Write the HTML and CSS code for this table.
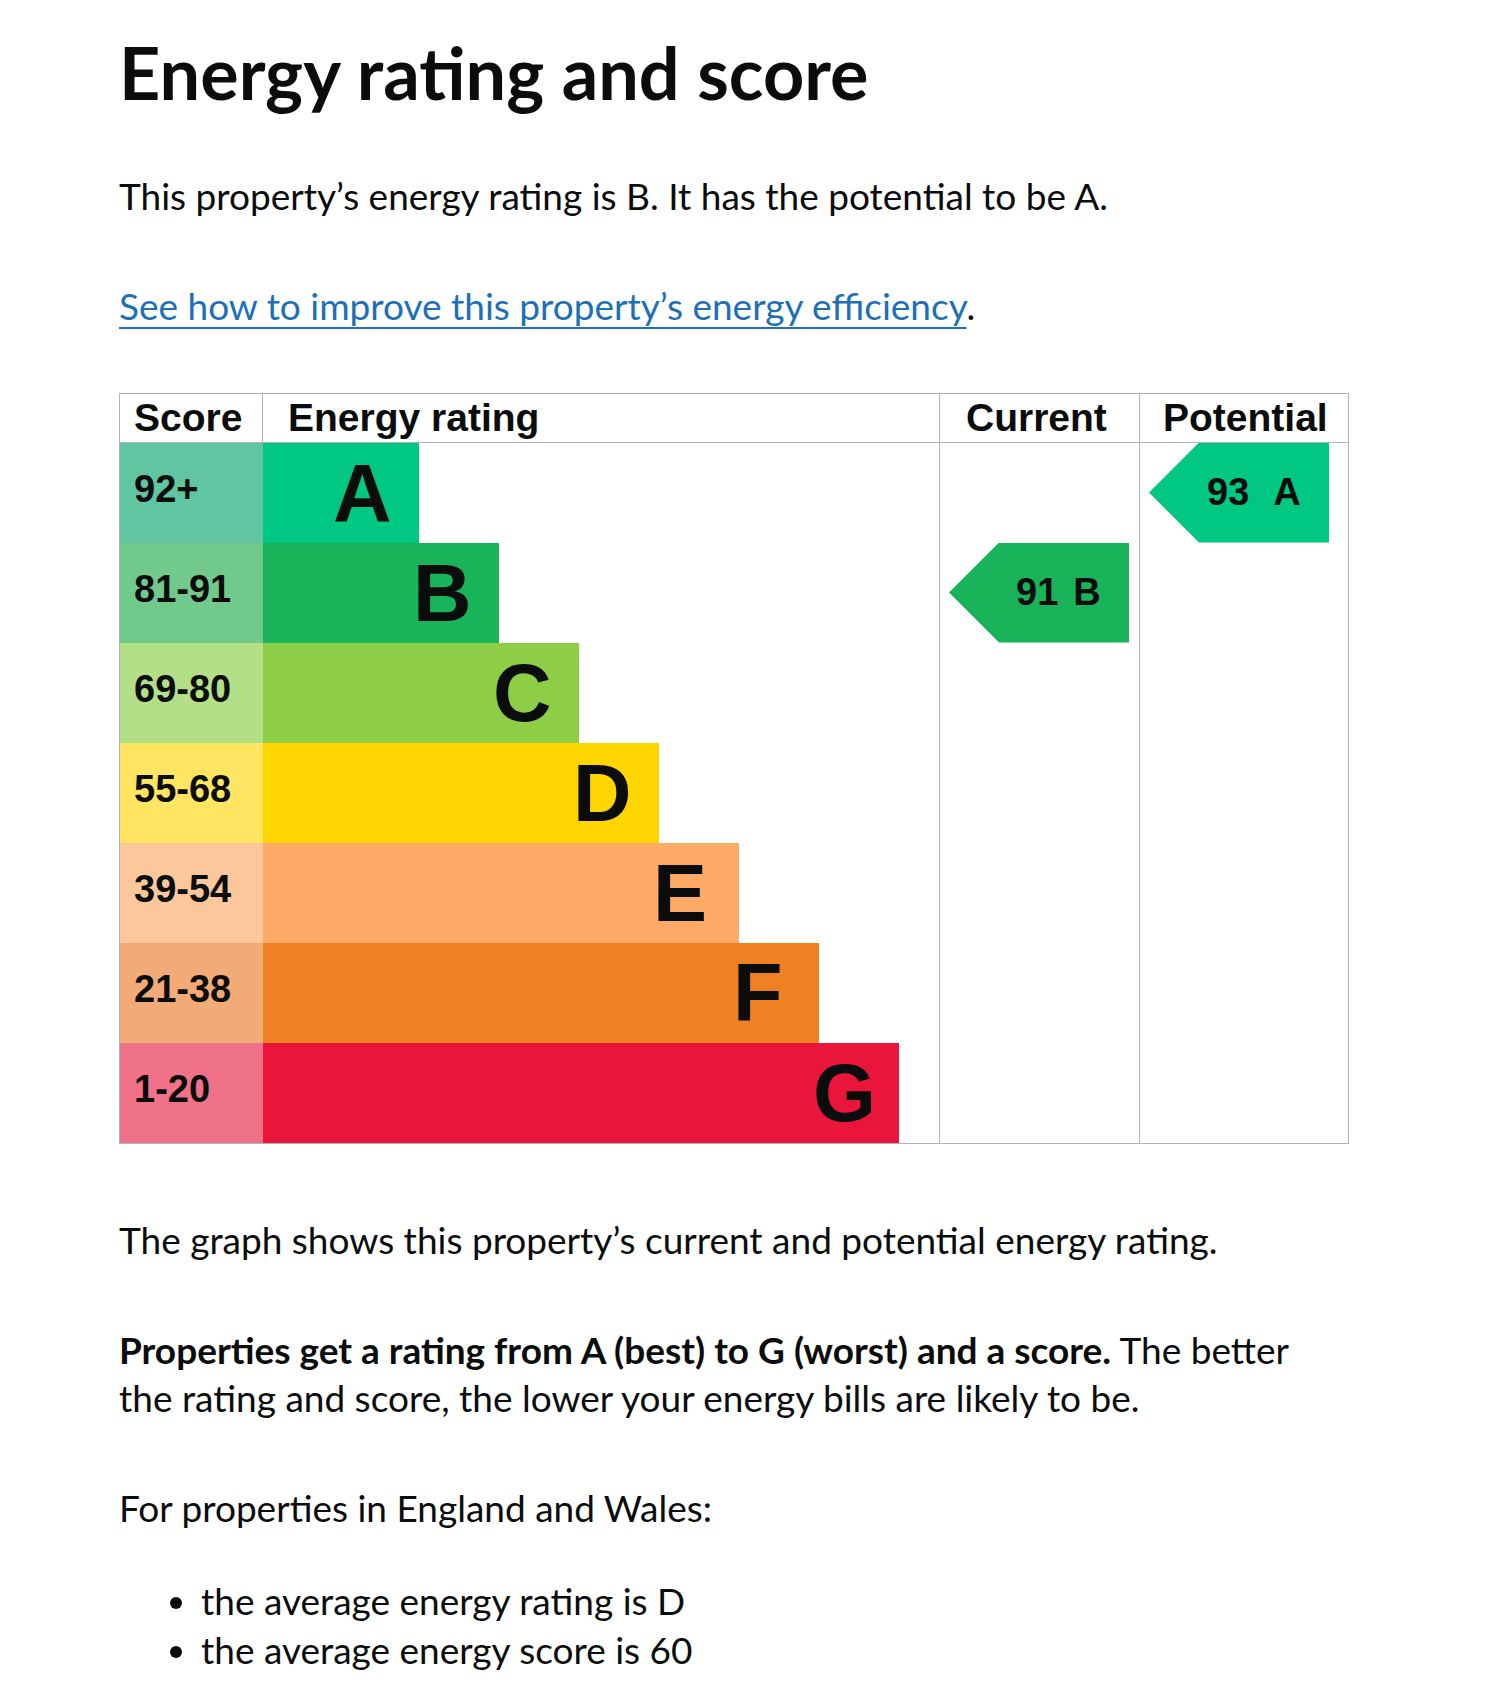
FILE: index.html
```
<!DOCTYPE html>
<html lang="en">
<head>
<meta charset="utf-8">
<title>Energy rating and score</title>
<link rel="stylesheet" href="styles.css">
</head>
<body>
<main class="page">
  <h1 class="title">Energy rating and score</h1>
  <p class="body">This property’s energy rating is B. It has the potential to be A.</p>
  <p class="body"><a class="link" href="#">See how to improve this property’s energy efficiency</a>.</p>

  <div class="epc">
    <div class="h-cell h-score">Score</div>
    <div class="h-cell h-rating">Energy rating</div>
    <div class="h-cell h-current">Current</div>
    <div class="h-cell h-potential">Potential</div>

    <div class="score s-a">92+</div><div class="band"><div class="bar b-a"><span class="let">A</span></div></div>
    <div class="score s-b">81-91</div><div class="band"><div class="bar b-b"><span class="let">B</span></div></div>
    <div class="score s-c">69-80</div><div class="band"><div class="bar b-c"><span class="let">C</span></div></div>
    <div class="score s-d">55-68</div><div class="band"><div class="bar b-d"><span class="let">D</span></div></div>
    <div class="score s-e">39-54</div><div class="band"><div class="bar b-e"><span class="let">E</span></div></div>
    <div class="score s-f">21-38</div><div class="band"><div class="bar b-f"><span class="let">F</span></div></div>
    <div class="score s-g">1-20</div><div class="band"><div class="bar b-g"><span class="let">G</span></div></div>

    <div class="col col-current"></div>
    <div class="col col-potential"></div>

    <div class="arrow arrow-current"><span class="num">91</span><span class="alet">B</span></div>
    <div class="arrow arrow-potential"><span class="num">93</span><span class="alet">A</span></div>
  </div>

  <p class="body">The graph shows this property’s current and potential energy rating.</p>
  <p class="body"><strong>Properties get a rating from A (best) to G (worst) and a score.</strong> The better the rating and score, the lower your energy bills are likely to be.</p>
  <p class="body lead-in">For properties in England and Wales:</p>
  <ul class="list">
    <li>the average energy rating is D</li>
    <li>the average energy score is 60</li>
  </ul>
</main>
</body>
</html>
```
FILE: styles.css
```
html, body { margin: 0; padding: 0; background: #fff; }
body { color: #0b0c0c; font-family: Lato, "Noto Sans", sans-serif; }

.page { padding: 33px 0 0 119px; width: 1230px; }

.title { font-size: 72px; line-height: 78px; font-weight: 700; margin: 0 0 61px; }

.body { font-size: 37px; line-height: 48.5px; margin: 0 0 61.5px; }
.body strong { font-weight: 700; }
.lead-in { margin-bottom: 43.5px; }
.link { color: #1d70b8; text-decoration: underline; text-decoration-thickness: 2px; text-underline-offset: 7px; }

.epc {
  display: inline-grid;
  grid-template-columns: 143px 676px 200px 209px;
  grid-template-rows: 49px repeat(7, 100px);
  border: 1px solid #b1b4b6;
  font-family: "Liberation Sans", Arial, sans-serif;
  font-weight: 700;
  color: #0b0c0c;
  margin: 0.5px 0 72px;
  vertical-align: top;
}
.h-cell { grid-row: 1; font-size: 39px; line-height: 46px; padding-top: 1px; border-bottom: 1px solid #b1b4b6; box-sizing: border-box; }
.h-score { grid-column: 1; padding-left: 14px; border-right: 1px solid #b1b4b6; }
.h-rating { grid-column: 2; padding-left: 25px; }
.h-current { grid-column: 3; padding-left: 27px; }
.h-potential { grid-column: 4; padding-left: 24px; }

.score { grid-column: 1; font-size: 38px; line-height: 43px; padding: 25px 0 0 14px; }
.band { grid-column: 2; display: flex; }
.bar { display: flex; justify-content: flex-end; height: 100px; }
.let { width: 86px; font-size: 81px; line-height: 90px; padding-top: 5px; }

.s-a { background: #5fc6a1; } .b-a { background: #00c781; width: 156px; }
.s-b { background: #72c98c; } .b-b { background: #19b459; width: 236px; }
.s-c { background: #b3e086; } .b-c { background: #8dce46; width: 316px; }
.s-d { background: #ffe562; } .b-d { background: #ffd500; width: 396px; }
.s-e { background: #fdc79c; } .b-e { background: #fcaa65; width: 476px; }
.s-f { background: #f2ab77; } .b-f { background: #ef8023; width: 556px; }
.s-g { background: #ef7289; } .b-g { background: #e9153b; width: 636px; }

.col { grid-row: 1 / 9; border-left: 1px solid #b1b4b6; }
.col-current { grid-column: 3; }
.col-potential { grid-column: 4; }

.arrow {
  display: flex;
  width: 180px; height: 100px;
  margin-left: 10px;
  box-sizing: border-box;
  clip-path: polygon(50px 0, 100% 0, 100% 100%, 50px 100%, 0 50%);
  font-size: 38px; line-height: 43px; padding-top: 28px;
}
.arrow-current { grid-column: 3; grid-row: 3; background: #19b459; padding-left: 67px; }
.arrow-potential { grid-column: 4; grid-row: 2; background: #00c781; padding-left: 58px; }
.arrow-current .alet { margin-left: 15px; }
.arrow-potential .alet { margin-left: 24px; }

.list { font-size: 37px; line-height: 49px; margin: 0; padding-left: 82px; }
```
